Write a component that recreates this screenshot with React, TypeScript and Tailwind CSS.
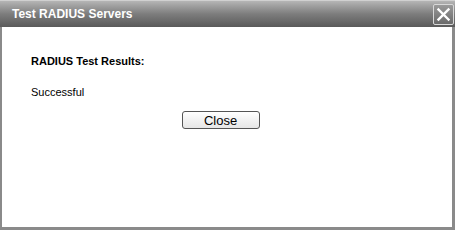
export default function App() {
  return (
    <div className="w-[455px] h-[230px] bg-white font-['Liberation_Sans',Arial,sans-serif]">
      <div className="flex h-full flex-col border-l-2 border-r-[3px] border-b-[3px] border-[#8a8a8a]">
        <div className="flex h-[27px] items-center justify-between bg-gradient-to-b from-[#b5b5b5] via-[#7d7d7d] to-[#5a5a5a] pl-[12px] pr-[1px] -mx-[2px] -mr-[3px] border-t border-[#d0d0d0]">
          <span className="text-[12px] font-bold text-white">Test RADIUS Servers</span>
          <button className="flex h-[21px] w-[21px] items-center justify-center rounded-[2px] border border-[#d8d8d8] bg-gradient-to-b from-[#9a9a9a] to-[#6a6a6a]">
            <svg width="15" height="15" viewBox="0 0 15 15">
              <path d="M2.5 2.5 L12.5 12.5 M12.5 2.5 L2.5 12.5" stroke="white" strokeWidth="2.4" strokeLinecap="square" />
            </svg>
          </button>
        </div>
        <div className="flex flex-col px-[29px] pt-[26px] text-[11px] text-black">
          <div className="font-bold">RADIUS Test Results:</div>
          <div className="mt-[14px]">Successful</div>
          <div className="mt-[11px] flex justify-center pr-[13px]">
            <button className="h-[18px] w-[78px] rounded-[3px] border border-[#555] bg-gradient-to-b from-white to-[#e6e6e6] text-[13px] leading-none text-black">
              Close
            </button>
          </div>
        </div>
      </div>
    </div>
  );
}
